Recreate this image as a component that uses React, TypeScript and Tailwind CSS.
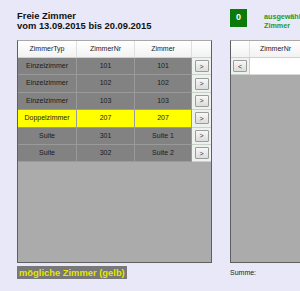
import React from 'react';

const rows = [
    {typ: "Einzelzimmer", nr: "101", zimmer: "101", sel: false},
    {typ: "Einzelzimmer", nr: "102", zimmer: "102", sel: false},
    {typ: "Einzelzimmer", nr: "103", zimmer: "103", sel: false},
    {typ: "Doppelzimmer", nr: "207", zimmer: "207", sel: true},
    {typ: "Suite", nr: "301", zimmer: "Suite 1", sel: false},
    {typ: "Suite", nr: "302", zimmer: "Suite 2", sel: false},
];

const SmallButton = ({label}: { label: string }) => (
    <div className="w-[14px] h-[12px] border border-[#9c9c9c] rounded-[1px] bg-gradient-to-b from-[#f8f8f8] to-[#dcdcdc] flex items-center justify-center text-[7px] text-[#333] leading-none">
        {label}
    </div>
);

const App = () => {
    return (
        <div className="w-[300px] h-[291px] overflow-hidden bg-[#e8e8f8] font-['Liberation_Sans',Arial,sans-serif] flex pl-[17px] pt-[9px]">
            {/* linke Seite */}
            <div className="w-[195px] shrink-0 flex flex-col">
                <div className="h-[31px] text-[9.4px] font-bold text-[#111] leading-[10px] pt-[2px]">
                    <div>Freie Zimmer</div>
                    <div>vom 13.09.2015 bis 20.09.2015</div>
                </div>
                <div className="h-[223px] border-l border-r border-b border-[#5f5f5f] border-t border-t-[#a8a8a8] bg-[#ababab] flex flex-col">
                    <div className="h-[17px] flex bg-gradient-to-b from-white to-[#f2f2f2] border-b border-[#d0d0d0] text-[7px] text-[#222]">
                        <div className="w-[59px] flex items-center justify-center border-r border-[#e0e0e0]">ZimmerTyp</div>
                        <div className="w-[58px] flex items-center justify-center border-r border-[#e0e0e0]">ZimmerNr</div>
                        <div className="w-[57px] flex items-center justify-center border-r border-[#e0e0e0]">Zimmer</div>
                        <div className="flex-1"></div>
                    </div>
                    {rows.map((r, index) => (
                        <div key={index} className="h-[17.4px] flex text-[7px] text-[#1a1a1a]">
                            <div className={`w-[59px] flex items-center justify-center border-r border-b border-[#9a9a9a] ${r.sel ? "bg-[#ffff00]" : "bg-[#828282]"}`}>{r.typ}</div>
                            <div className={`w-[58px] flex items-center justify-center border-r border-b border-[#9a9a9a] ${r.sel ? "bg-[#ffff00]" : "bg-[#828282]"}`}>{r.nr}</div>
                            <div className={`w-[57px] flex items-center justify-center border-r border-b border-[#9a9a9a] ${r.sel ? "bg-[#ffff00]" : "bg-[#828282]"}`}>{r.zimmer}</div>
                            <div className="flex-1 flex items-center justify-center bg-[#eef2ee] border-b border-[#c8d0c8]">
                                <SmallButton label=">"/>
                            </div>
                        </div>
                    ))}
                </div>
                <div className="mt-[3px] self-start h-[13px] px-[2px] bg-[#787878] text-[#e6e600] text-[9.4px] font-bold flex items-center leading-none">
                    mögliche Zimmer (gelb)
                </div>
            </div>

            {/* rechte Seite */}
            <div className="ml-[18px] w-[120px] shrink-0 flex flex-col">
                <div className="h-[31px] flex items-start">
                    <div className="w-[17px] h-[18px] bg-[#0b7a0b] text-white text-[9px] font-bold flex items-center justify-center">0</div>
                    <div className="ml-[17px] mt-[3px] text-[7.2px] font-bold text-[#1f9a1f] leading-[9px]">
                        <div>ausgewählte</div>
                        <div>Zimmer</div>
                    </div>
                </div>
                <div className="h-[223px] border-l border-b border-[#5f5f5f] border-t border-t-[#a8a8a8] bg-[#ababab] flex flex-col">
                    <div className="h-[17px] flex bg-gradient-to-b from-white to-[#f2f2f2] border-b border-[#d0d0d0] text-[7px] text-[#222]">
                        <div className="w-[19px] border-r border-[#e0e0e0]"></div>
                        <div className="w-[52px] flex items-center justify-center border-r border-[#e0e0e0]">ZimmerNr</div>
                        <div className="flex-1"></div>
                    </div>
                    <div className="h-[17.4px] flex">
                        <div className="w-[19px] flex items-center justify-center bg-[#eef2ee] border-r border-b border-[#c8d0c8]">
                            <SmallButton label="<"/>
                        </div>
                        <div className="flex-1 bg-white border-b border-[#d8d8d8]"></div>
                    </div>
                </div>
                <div className="mt-[5px] text-[7px] text-[#222]">Summe:</div>
            </div>
        </div>
    );
};

export default App;
